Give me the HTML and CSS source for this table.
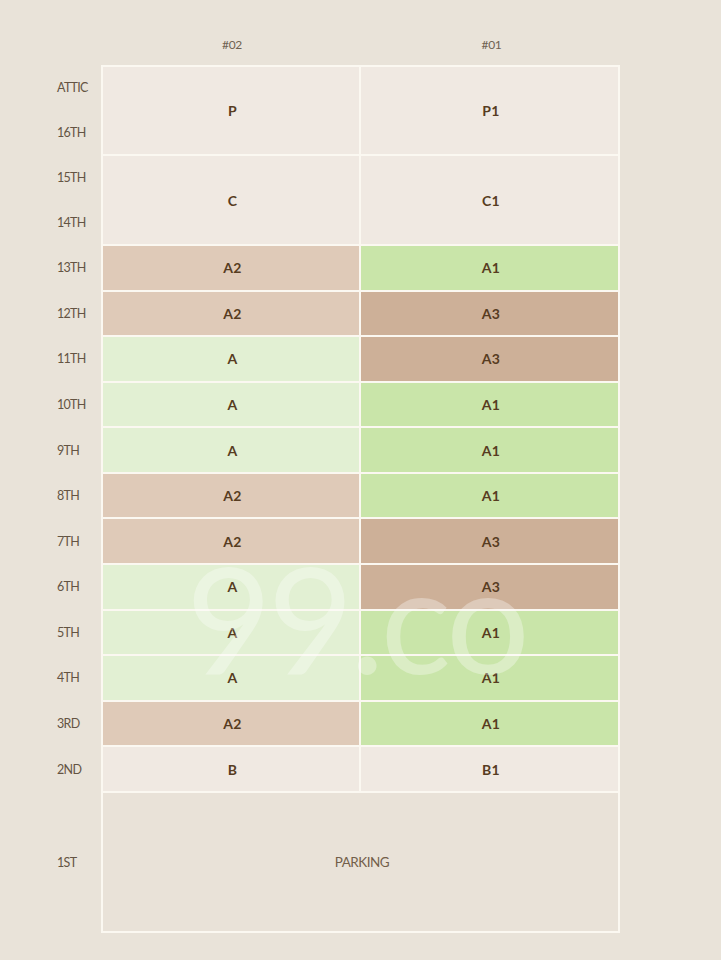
FILE: index.html
```html
<!DOCTYPE html>
<html>
<head>
<meta charset="utf-8">
<link rel="stylesheet" href="styles.css">
</head>
<body>
<div class="chart">
  <div class="head h2">#02</div>
  <div class="head h1">#01</div>

  <div class="lbl" style="grid-row:2">ATTIC</div>
  <div class="lbl" style="grid-row:3">16TH</div>
  <div class="lbl" style="grid-row:4">15TH</div>
  <div class="lbl" style="grid-row:5">14TH</div>
  <div class="lbl" style="grid-row:6">13TH</div>
  <div class="lbl" style="grid-row:7">12TH</div>
  <div class="lbl" style="grid-row:8">11TH</div>
  <div class="lbl" style="grid-row:9">10TH</div>
  <div class="lbl" style="grid-row:10">9TH</div>
  <div class="lbl" style="grid-row:11">8TH</div>
  <div class="lbl" style="grid-row:12">7TH</div>
  <div class="lbl" style="grid-row:13">6TH</div>
  <div class="lbl" style="grid-row:14">5TH</div>
  <div class="lbl" style="grid-row:15">4TH</div>
  <div class="lbl" style="grid-row:16">3RD</div>
  <div class="lbl" style="grid-row:17">2ND</div>
  <div class="lbl" style="grid-row:18">1ST</div>

  <div class="cell c2 light top" style="grid-row:2 / span 2">P</div>
  <div class="cell c1 light top" style="grid-row:2 / span 2">P1</div>
  <div class="cell c2 light" style="grid-row:4 / span 2">C</div>
  <div class="cell c1 light" style="grid-row:4 / span 2">C1</div>

  <div class="cell c2 tan" style="grid-row:6">A2</div>
  <div class="cell c1 green" style="grid-row:6">A1</div>
  <div class="cell c2 tan" style="grid-row:7">A2</div>
  <div class="cell c1 brown" style="grid-row:7">A3</div>
  <div class="cell c2 pale" style="grid-row:8">A</div>
  <div class="cell c1 brown" style="grid-row:8">A3</div>
  <div class="cell c2 pale" style="grid-row:9">A</div>
  <div class="cell c1 green" style="grid-row:9">A1</div>
  <div class="cell c2 pale" style="grid-row:10">A</div>
  <div class="cell c1 green" style="grid-row:10">A1</div>
  <div class="cell c2 tan" style="grid-row:11">A2</div>
  <div class="cell c1 green" style="grid-row:11">A1</div>
  <div class="cell c2 tan" style="grid-row:12">A2</div>
  <div class="cell c1 brown" style="grid-row:12">A3</div>
  <div class="cell c2 pale" style="grid-row:13">A</div>
  <div class="cell c1 brown" style="grid-row:13">A3</div>
  <div class="cell c2 pale" style="grid-row:14">A</div>
  <div class="cell c1 green" style="grid-row:14">A1</div>
  <div class="cell c2 pale" style="grid-row:15">A</div>
  <div class="cell c1 green" style="grid-row:15">A1</div>
  <div class="cell c2 tan" style="grid-row:16">A2</div>
  <div class="cell c1 green" style="grid-row:16">A1</div>
  <div class="cell c2 light" style="grid-row:17">B</div>
  <div class="cell c1 light" style="grid-row:17">B1</div>

  <div class="cell parking">PARKING</div>

  <div class="watermark">99.co</div>
</div>
</body>
</html>
```

FILE: styles.css
```css
html, body {
  margin: 0;
  padding: 0;
  background: #e9e3d9;
}

.chart {
  position: relative;
  display: grid;
  grid-template-columns: 101px 259px 260px;
  grid-template-rows: 65px repeat(4, 45px) repeat(12, 45.58px) 141px;
  width: 721px;
  height: 960px;
  font-family: "Lato", "Open Sans", sans-serif;
}

.head {
  grid-row: 1;
  display: flex;
  align-items: center;
  justify-content: center;
  padding-top: 24px;
  padding-left: 3px;
  box-sizing: border-box;
  font-size: 12px;
  color: #6f6252;
  letter-spacing: -0.3px;
}
.h2 { grid-column: 2; }
.h1 { grid-column: 3; }

.lbl {
  grid-column: 1;
  display: flex;
  align-items: center;
  padding-left: 57px;
  font-size: 12.5px;
  color: #645443;
  letter-spacing: -0.7px;
}

.cell {
  display: flex;
  align-items: center;
  justify-content: center;
  padding-left: 3px;
  border: 1px solid #fbf8f1;
  font-size: 14px;
  font-weight: 700;
  color: #573c21;
  letter-spacing: 0.3px;
}
.c2 { grid-column: 2; border-left-width: 2px; }
.c1 { grid-column: 3; border-right-width: 2px; }
.top { border-top-width: 2px; }

.light { background: #f0e9e2; }
.tan { background: #dfcab8; }
.brown { background: #cdb098; }
.green { background: #c9e5a9; }
.pale { background: #e2f0d3; }

.parking {
  grid-column: 2 / span 2;
  grid-row: 18;
  background: #e9e2d8;
  border-width: 1px 2px 2px 2px;
  font-weight: 400;
  font-size: 13.5px;
  color: #735f4a;
  letter-spacing: -0.5px;
}

.watermark {
  position: absolute;
  left: 186px;
  top: 543px;
  font-family: "Lato", sans-serif;
  font-weight: 400;
  font-size: 148px;
  line-height: 1;
  color: rgba(255, 255, 255, 0.33);
  letter-spacing: -4px;
  pointer-events: none;
}
```
